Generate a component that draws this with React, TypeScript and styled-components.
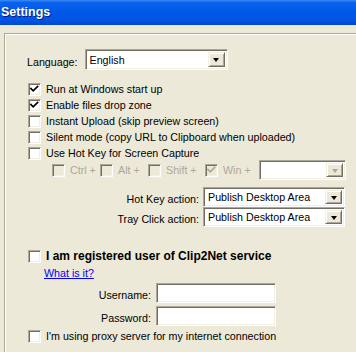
import React from 'react';
import styled, { createGlobalStyle } from 'styled-components';

const colors = {
  face: '#ECE9D8',
  shadow: '#ACA899',
  darkShadow: '#716F64',
  light: '#F1EFE2',
  disabled: '#ACA899',
};

const GlobalStyle = createGlobalStyle`
  html, body {
    margin: 0;
    padding: 0;
    background: ${colors.face};
  }
  body {
    font-family: 'Liberation Sans', Arial, sans-serif;
    font-size: 10.7px;
    color: #000000;
  }
`;

const Window = styled.div`
  width: 356px;
  height: 352px;
  overflow: hidden;
  background: ${colors.face};
  display: flex;
  flex-direction: column;
`;

const TitleBar = styled.div`
  height: 25px;
  flex-shrink: 0;
  display: flex;
  align-items: center;
  padding-left: 1px;
  background: linear-gradient(
    to bottom,
    #3b8cf7 0%,
    #0a62ec 10%,
    #0058e8 45%,
    #0055e3 80%,
    #0046cf 100%
  );
`;

const Title = styled.span`
  font-family: 'Liberation Sans', Arial, sans-serif;
  font-weight: bold;
  font-size: 12.5px;
  color: #ffffff;
  text-shadow: 1px 1px 0 #0a1883;
  margin-top: -2px;
`;

const Body = styled.div`
  flex: 1;
  padding: 8px 0 0 4px;
`;

const Group = styled.div`
  width: 380px;
  height: 340px;
  border-top: 1px solid ${colors.shadow};
  border-left: 1px solid ${colors.shadow};
  box-shadow: inset 1px 1px 0 #ffffff;
  padding: 15px 0 0 23px;
  display: flex;
  flex-direction: column;
`;

const LangRow = styled.div`
  display: flex;
  align-items: center;
  gap: 7px;
  height: 21px;
  margin-left: -1px;
`;

const Label = styled.span<{ $disabled?: boolean }>`
  white-space: nowrap;
  padding-top: 4px;
  color: ${(p) => (p.$disabled ? colors.disabled : '#000')};
`;

const Sunken = styled.div<{ $width: number; $height?: number }>`
  box-sizing: border-box;
  width: ${(p) => p.$width}px;
  height: ${(p) => p.$height ?? 21}px;
  background: #ffffff;
  border: 1px solid;
  border-color: ${colors.shadow} #ffffff #ffffff ${colors.shadow};
  box-shadow: inset 1px 1px 0 ${colors.darkShadow}, inset -1px -1px 0 ${colors.light};
  display: flex;
  align-items: center;
  padding: 2px;
`;

const SelectText = styled.span`
  flex: 1;
  padding-left: 2px;
  white-space: nowrap;
  overflow: hidden;
`;

const DropButton = styled.div`
  box-sizing: border-box;
  width: 17px;
  height: 100%;
  background: ${colors.face};
  border: 1px solid;
  border-color: ${colors.light} ${colors.darkShadow} ${colors.darkShadow} ${colors.light};
  box-shadow: inset 1px 1px 0 #ffffff, inset -1px -1px 0 ${colors.shadow};
  display: flex;
  align-items: center;
  justify-content: center;
`;

const Arrow = styled.span<{ $disabled?: boolean }>`
  width: 0;
  height: 0;
  border-left: 3.5px solid transparent;
  border-right: 3.5px solid transparent;
  border-top: 4px solid ${(p) => (p.$disabled ? colors.disabled : '#000')};
  margin-top: 1px;
`;

const CheckList = styled.div`
  display: flex;
  flex-direction: column;
  margin-top: 11px;
`;

const CheckRow = styled.div<{ $bold?: boolean }>`
  display: flex;
  align-items: center;
  gap: 5px;
  height: 16px;
  white-space: nowrap;
  font-weight: ${(p) => (p.$bold ? 'bold' : 'normal')};
  font-size: ${(p) => (p.$bold ? '12px' : '10.7px')};
`;

const Box = styled.span<{ $disabled?: boolean }>`
  box-sizing: border-box;
  width: 13px;
  height: 13px;
  flex-shrink: 0;
  background: ${(p) => (p.$disabled ? colors.face : '#ffffff')};
  border: 1px solid;
  border-color: ${colors.shadow} #ffffff #ffffff ${colors.shadow};
  box-shadow: inset 1px 1px 0 ${colors.darkShadow}, inset -1px -1px 0 ${colors.light};
  display: flex;
  align-items: center;
  justify-content: center;
`;

const SubRow = styled.div`
  display: grid;
  grid-template-columns: 48px 48px 57px 54px auto;
  align-items: center;
  height: 20px;
  margin: -1px 0 0 24px;
  color: ${colors.disabled};
`;

const SubItem = styled.div`
  display: flex;
  align-items: center;
  gap: 5px;
  white-space: nowrap;
`;

const FormGrid = styled.div<{ $labelWidth: number; $gap: number; $rowGap: number }>`
  display: grid;
  grid-template-columns: ${(p) => p.$labelWidth}px auto;
  column-gap: ${(p) => p.$gap}px;
  row-gap: ${(p) => p.$rowGap}px;
  align-items: center;
  justify-items: end;
  & > *:nth-child(2n) {
    justify-self: start;
  }
`;

const ActionGrid = styled(FormGrid)`
  margin-top: 7px;
`;

const RegRow = styled(CheckRow)`
  margin-top: 21px;
`;

const HelpLink = styled.a`
  color: #0000ff;
  text-decoration: underline;
  margin: 3px 0 0 16px;
  cursor: pointer;
  line-height: 13px;
  align-self: flex-start;
`;

const CredGrid = styled(FormGrid)`
  margin-top: 3px;
`;

const ProxyRow = styled(CheckRow)`
  margin-top: 2px;
`;

const Check = ({ disabled }: { disabled?: boolean }) => (
  <svg width="9" height="9" viewBox="0 0 9 9">
    <path
      d="M1 3.5 L3.2 5.8 L7.6 1.4"
      fill="none"
      stroke={disabled ? colors.disabled : '#000'}
      strokeWidth="1.7"
      strokeLinecap="square"
    />
  </svg>
);

const Checkbox = ({ checked, disabled }: { checked?: boolean; disabled?: boolean }) => (
  <Box $disabled={disabled}>{checked && <Check disabled={disabled} />}</Box>
);

const Select = ({
  width,
  height,
  value,
  disabled,
}: {
  width: number;
  height?: number;
  value?: string;
  disabled?: boolean;
}) => (
  <Sunken $width={width} $height={height}>
    <SelectText>{value}</SelectText>
    <DropButton>
      <Arrow $disabled={disabled} />
    </DropButton>
  </Sunken>
);

const options = [
  { label: 'Run at Windows start up', checked: true },
  { label: 'Enable files drop zone', checked: true },
  { label: 'Instant Upload (skip preview screen)' },
  { label: 'Silent mode (copy URL to Clipboard when uploaded)' },
  { label: 'Use Hot Key for Screen Capture' },
];

const modifiers = [
  { label: 'Ctrl +' },
  { label: 'Alt +' },
  { label: 'Shift +' },
  { label: 'Win +', checked: true },
];

const App: React.FC = () => (
  <>
    <GlobalStyle />
    <Window>
      <TitleBar>
        <Title>Settings</Title>
      </TitleBar>
      <Body>
        <Group>
          <LangRow>
            <Label>Language:</Label>
            <Select width={143} value="English" />
          </LangRow>

          <CheckList>
            {options.map((o) => (
              <CheckRow key={o.label}>
                <Checkbox checked={o.checked} />
                {o.label}
              </CheckRow>
            ))}
          </CheckList>

          <SubRow>
            {modifiers.map((m) => (
              <SubItem key={m.label}>
                <Checkbox checked={m.checked} disabled />
                {m.label}
              </SubItem>
            ))}
            <Select width={87} height={20} disabled />
          </SubRow>

          <ActionGrid $labelWidth={171} $gap={4} $rowGap={0}>
            <Label>Hot Key action:</Label>
            <Select width={142} height={20} value="Publish Desktop Area" />
            <Label>Tray Click action:</Label>
            <Select width={142} height={20} value="Publish Desktop Area" />
          </ActionGrid>

          <RegRow $bold>
            <Checkbox />
            I am registered user of Clip2Net service
          </RegRow>
          <HelpLink>What is it?</HelpLink>

          <CredGrid $labelWidth={123} $gap={5} $rowGap={3}>
            <Label>Username:</Label>
            <Sunken $width={120} $height={20} />
            <Label>Password:</Label>
            <Sunken $width={120} $height={20} />
          </CredGrid>

          <ProxyRow>
            <Checkbox />
            I'm using proxy server for my internet connection
          </ProxyRow>
        </Group>
      </Body>
    </Window>
  </>
);

export default App;
